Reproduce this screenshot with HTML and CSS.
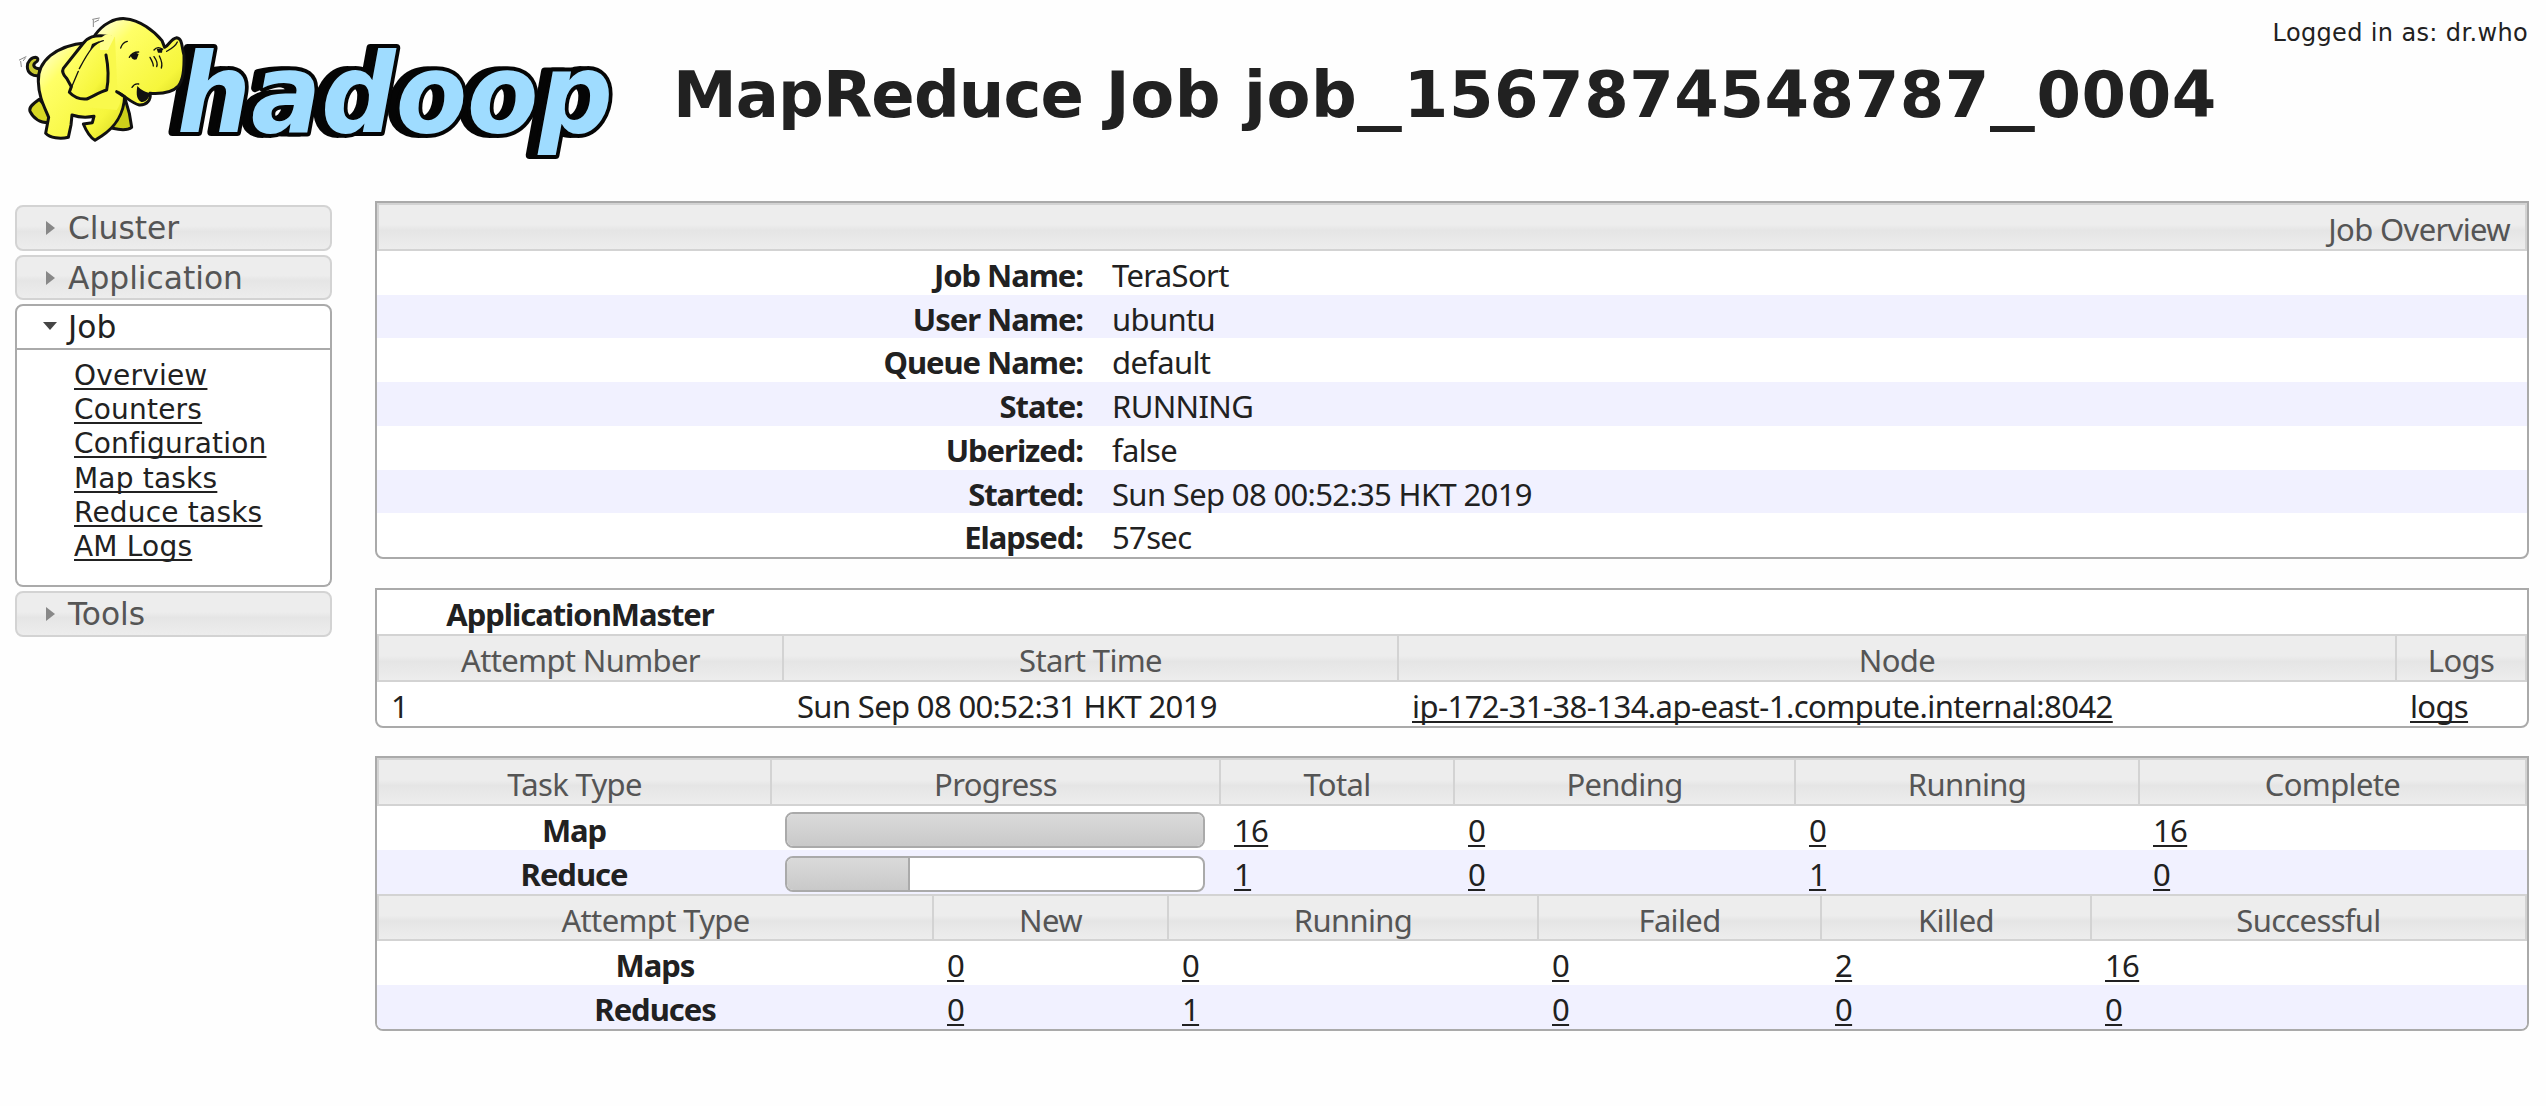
FILE: index.html
```html
<!DOCTYPE html>
<html lang="en">
<head>
<meta charset="utf-8">
<title>MapReduce Job job_1567874548787_0004</title>
<link rel="stylesheet" href="styles.css">
</head>
<body>
<header class="header">
  <svg class="logo" width="640" height="170" viewBox="0 0 640 170" role="img" aria-label="hadoop">
    <defs>
      <linearGradient id="skin" x1="0" y1="0" x2="1" y2="1">
        <stop offset="0" stop-color="#fffff0"/>
        <stop offset=".28" stop-color="#ffff66"/>
        <stop offset=".75" stop-color="#f6f63c"/>
        <stop offset="1" stop-color="#d2d21c"/>
      </linearGradient>
    </defs>
    <text class="wordmark" x="177" y="132" textLength="436" lengthAdjust="spacingAndGlyphs">hadoop</text>
    <g transform="scale(.33333)" stroke="#111" stroke-width="9" stroke-linejoin="round" stroke-linecap="round" fill="url(#skin)">
      <path fill="#d8d824" d="M118 298C98 312 86 322 90 334C100 354 120 368 145 368L155 340Z"/>
      <path fill="#cccf1a" d="M374 292L388 340L395 382C385 390 360 390 338 385L330 350Z"/>
      <path fill="#c8c830" d="M120 226C100 232 82 218 82 200C82 184 94 172 108 172C116 174 115 184 106 188C98 194 100 206 118 206Z"/>
      <path d="M260 128C165 136 112 185 115 245C116 292 134 322 146 352L137 400C150 414 180 418 205 412L213 375L216 345C236 352 260 353 282 349L277 368L250 372C260 396 270 412 285 421L305 408C340 385 372 345 374 288L340 180Z"/>
      <path d="M285 105C310 70 345 54 375 56C420 60 462 92 486 122L494 142C506 138 512 116 530 113C548 116 544 138 552 165C553 200 552 238 535 258C515 280 480 282 450 280C454 300 440 316 418 315C396 310 378 290 350 275L300 270Z"/>
      <path fill="#f9f94c" stroke="none" d="M290 160L345 110L352 268C366 290 364 310 350 330L240 320Z"/>
      <path fill="none" d="M350 275L374 290"/>
      <path fill="#111" stroke="none" d="M412 258C424 272 440 276 449 280C448 296 436 308 424 306C410 298 408 284 412 258Z"/>
      <path d="M330 110C280 101 262 114 248 132L190 205C185 215 190 225 200 235L214 260L208 277C225 295 240 299 260 297C278 290 300 275 320 270C326 240 325 200 318 165"/>
      <path d="M300 116C320 98 332 100 342 114L324 150L300 150Z" fill="#ffff8c" stroke="none"/>
      <g fill="none" stroke-width="4">
        <path d="M310 122C285 128 270 146 238 206M212 268L235 214M362 144C366 132 372 126 382 124M388 172C394 160 402 156 416 156M462 150C470 140 480 142 488 148M450 172C458 186 460 192 460 198M462 170C472 184 474 192 470 200M478 168C486 184 488 192 484 204M500 154C514 146 526 140 532 126M396 262C402 252 408 250 416 252"/>
      </g>
      <path fill="#111" stroke="none" d="M392 166C400 156 410 158 416 162L410 178C400 182 394 176 392 166ZM470 146L488 146L486 158L474 158ZM276 132L300 122L270 150Z"/>
      <path fill="none" stroke="#888" stroke-width="3" d="M278 58L298 54M280 60L280 80M284 66L296 60M58 180L78 170M62 184L64 200M70 182L76 174"/>
    </g>
  </svg>
  <h1 class="title"><span class="tight">MapReduce</span> Job job<span class="under">_</span>1567874548787<span class="under">_</span>0004</h1>
  <div class="login">Logged in as: dr.who</div>
</header>
<main class="layout">
  <nav class="nav">
    <h3 class="nav-head"><svg class="arrow" width="16" height="16" viewBox="0 0 16 16"><path d="M4 1L13 8L4 15Z"/></svg>Cluster</h3>
    <h3 class="nav-head"><svg class="arrow" width="16" height="16" viewBox="0 0 16 16"><path d="M4 1L13 8L4 15Z"/></svg>Application</h3>
    <div class="nav-open">
      <h3 class="nav-head active"><svg class="arrow" width="16" height="16" viewBox="0 0 16 16"><path d="M1 3H15L8 11Z"/></svg>Job</h3>
      <ul class="nav-links">
        <li><a href="#">Overview</a></li>
        <li><a href="#">Counters</a></li>
        <li><a href="#">Configuration</a></li>
        <li><a href="#">Map tasks</a></li>
        <li><a href="#">Reduce tasks</a></li>
        <li><a href="#">AM Logs</a></li>
      </ul>
    </div>
    <h3 class="nav-head"><svg class="arrow" width="16" height="16" viewBox="0 0 16 16"><path d="M4 1L13 8L4 15Z"/></svg>Tools</h3>
  </nav>
  <div class="content">
    <section class="panel overview">
      <div class="row head"><span class="cell">Job Overview</span></div>
      <div class="row"><b class="cell">Job Name:</b><span class="cell">TeraSort</span></div>
      <div class="row even"><b class="cell">User Name:</b><span class="cell">ubuntu</span></div>
      <div class="row"><b class="cell">Queue Name:</b><span class="cell">default</span></div>
      <div class="row even"><b class="cell">State:</b><span class="cell">RUNNING</span></div>
      <div class="row"><b class="cell">Uberized:</b><span class="cell">false</span></div>
      <div class="row even"><b class="cell">Started:</b><span class="cell">Sun Sep 08 00:52:35 HKT 2019</span></div>
      <div class="row"><b class="cell">Elapsed:</b><span class="cell">57sec</span></div>
    </section>
    <section class="panel masters">
      <div class="row"><b class="cell">ApplicationMaster</b></div>
      <div class="row head"><span class="cell">Attempt Number</span><span class="cell">Start Time</span><span class="cell">Node</span><span class="cell">Logs</span></div>
      <div class="row"><span class="cell">1</span><span class="cell">Sun Sep 08 00:52:31 HKT 2019</span><span class="cell"><a class="node" href="#">ip-172-31-38-134.ap-east-1.compute.internal:8042</a></span><span class="cell"><a href="#">logs</a></span></div>
    </section>
    <section class="panel tasks">
      <div class="row head"><span class="cell">Task Type</span><span class="cell">Progress</span><span class="cell">Total</span><span class="cell">Pending</span><span class="cell">Running</span><span class="cell">Complete</span></div>
      <div class="row"><b class="cell">Map</b><span class="cell"><span class="bar"><span class="fill full"></span></span></span><span class="cell"><a href="#">16</a></span><span class="cell"><a href="#">0</a></span><span class="cell"><a href="#">0</a></span><span class="cell"><a href="#">16</a></span></div>
      <div class="row even"><b class="cell">Reduce</b><span class="cell"><span class="bar"><span class="fill" style="width:29.6%"></span></span></span><span class="cell"><a href="#">1</a></span><span class="cell"><a href="#">0</a></span><span class="cell"><a href="#">1</a></span><span class="cell"><a href="#">0</a></span></div>
      <div class="row head attempts"><span class="cell">Attempt Type</span><span class="cell">New</span><span class="cell">Running</span><span class="cell">Failed</span><span class="cell">Killed</span><span class="cell">Successful</span></div>
      <div class="row attempts"><b class="cell">Maps</b><span class="cell"><a href="#">0</a></span><span class="cell"><a href="#">0</a></span><span class="cell"><a href="#">0</a></span><span class="cell"><a href="#">2</a></span><span class="cell"><a href="#">16</a></span></div>
      <div class="row even attempts"><b class="cell">Reduces</b><span class="cell"><a href="#">0</a></span><span class="cell"><a href="#">1</a></span><span class="cell"><a href="#">0</a></span><span class="cell"><a href="#">0</a></span><span class="cell"><a href="#">0</a></span></div>
    </section>
  </div>
</main>
</body>
</html>
```
FILE: styles.css
```css
* { box-sizing: border-box; }
body {
  margin: 0;
  background: #fefefe;
  color: #212121;
  font-family: "DejaVu Sans", sans-serif;
}
a {
  color: inherit;
  text-decoration: underline;
  text-decoration-thickness: 2px;
  text-underline-offset: 3px;
  text-decoration-skip-ink: none;
}
.header {
  display: flex;
  height: 201px;
}
.logo {
  flex: none;
  overflow: visible;
}
.wordmark {
  font: italic bold 111px "DejaVu Sans", sans-serif;
  fill: #9fdcff;
  stroke: #050505;
  stroke-width: 8px;
  stroke-linejoin: round;
  paint-order: stroke;
  filter: drop-shadow(-8px 0 0 #050505);
}
.title {
  flex: none;
  width: 1606px;
  margin: 0;
  padding: 58px 0 0 33px;
  font-size: 64px;
  line-height: 74px;
  white-space: nowrap;
  letter-spacing: 0.55px;
}
.tight { letter-spacing: -0.9px; }
.under {
  display: inline-block;
  margin-right: 14px;
  transform: scaleX(1.4);
  transform-origin: left;
}
.login {
  flex: 1;
  padding: 19px 18px 0 0;
  text-align: right;
  white-space: nowrap;
  font-size: 24px;
  line-height: 28px;
  letter-spacing: 0.36px;
}
.layout {
  display: flex;
  gap: 43px;
  padding: 0 17px 0 15px;
}
.nav {
  display: flex;
  flex: none;
  flex-direction: column;
  gap: 4px;
  width: 317px;
  padding-top: 4px;
}
.nav-head {
  display: flex;
  align-items: center;
  gap: 10px;
  height: 45.5px;
  margin: 0;
  padding: 1px 0 0 25px;
  border: 2px solid #d3d3d3;
  border-radius: 8px;
  background: linear-gradient(#ededed 0 45%, #e5e5e5 58%, #ededed);
  color: #555;
  font-size: 31.3px;
  font-weight: normal;
}
.arrow { fill: #888; }
.nav-head.active {
  border-color: #aaa;
  border-radius: 8px 8px 0 0;
  background: #fff;
  color: #212121;
}
.active .arrow { fill: #454545; }
.nav-links {
  height: 237.5px;
  margin: 0;
  padding: 9.5px 0 0 57px;
  border: 2px solid #aaa;
  border-top: 0;
  border-radius: 0 0 8px 8px;
  background: #fff;
  list-style: none;
  font-size: 28px;
  line-height: 34.2px;
  letter-spacing: 0.2px;
}
.content {
  flex: 1;
  font-family: "Noto Sans", "Open Sans", sans-serif;
  font-size: 31px;
  line-height: 36px;
  letter-spacing: -0.65px;
}
.panel {
  display: flex;
  flex-direction: column;
  border: 2px solid #aaa;
  border-radius: 0 0 8px 8px;
  background: #fff;
}
.row {
  display: grid;
  flex: 1 1 0;
  min-height: 0;
}
.row:last-child { border-radius: 0 0 6px 6px; }
.even { background: #f1f1ff; }
.cell {
  padding: 6px 0 0 14px;
  white-space: nowrap;
}
b.cell {
  text-align: center;
  letter-spacing: -1.05px;
}
.head {
  flex: none;
  height: 48px;
  border: 2px solid #d3d3d3;
  background: linear-gradient(#ededed 0 45%, #e5e5e5 58%, #ededed);
  color: #555;
}
.head .cell {
  padding: 6px 0 0;
  text-align: center;
}
.head .cell + .cell { border-left: 2px solid #d3d3d3; }
.overview {
  height: 358px;
  margin-bottom: 29px;
}
.overview .row { grid-template-columns: 721px 1fr; }
.overview .row.head { grid-template-columns: 1fr; }
.overview .head .cell {
  padding-right: 15px;
  text-align: right;
}
.overview b.cell {
  padding: 6px 15px 0 0;
  text-align: right;
}
.masters {
  height: 140px;
  margin-bottom: 28px;
}
.masters .row { grid-template-columns: 406px 615px 998px 1fr; }
.masters .head { grid-template-columns: 403px 615px 998px 1fr; }
.masters b.cell { padding-left: 0; }
.node { letter-spacing: -0.53px; }
.tasks { height: 275px; }
.tasks .row { grid-template-columns: 394px 449px 234px 341px 344px 1fr; }
.tasks .row.head { grid-template-columns: 391px 449px 234px 341px 344px 1fr; }
.tasks .row.attempts { grid-template-columns: 556px 235px 370px 283px 270px 1fr; }
.tasks .row.head.attempts {
  height: 47px;
  grid-template-columns: 553px 235px 370px 283px 270px 1fr;
}
.tasks b.cell { padding-left: 0; }
.bar {
  display: block;
  width: 420px;
  height: 36px;
  border: 2px solid #aaa;
  border-radius: 8px;
  background: #fff;
  overflow: hidden;
}
.fill {
  display: block;
  height: 100%;
  border-right: 2px solid #aaa;
  background: linear-gradient(#dadada, #c9c9c9);
}
.fill.full {
  width: 100%;
  border-right: 0;
}
```
